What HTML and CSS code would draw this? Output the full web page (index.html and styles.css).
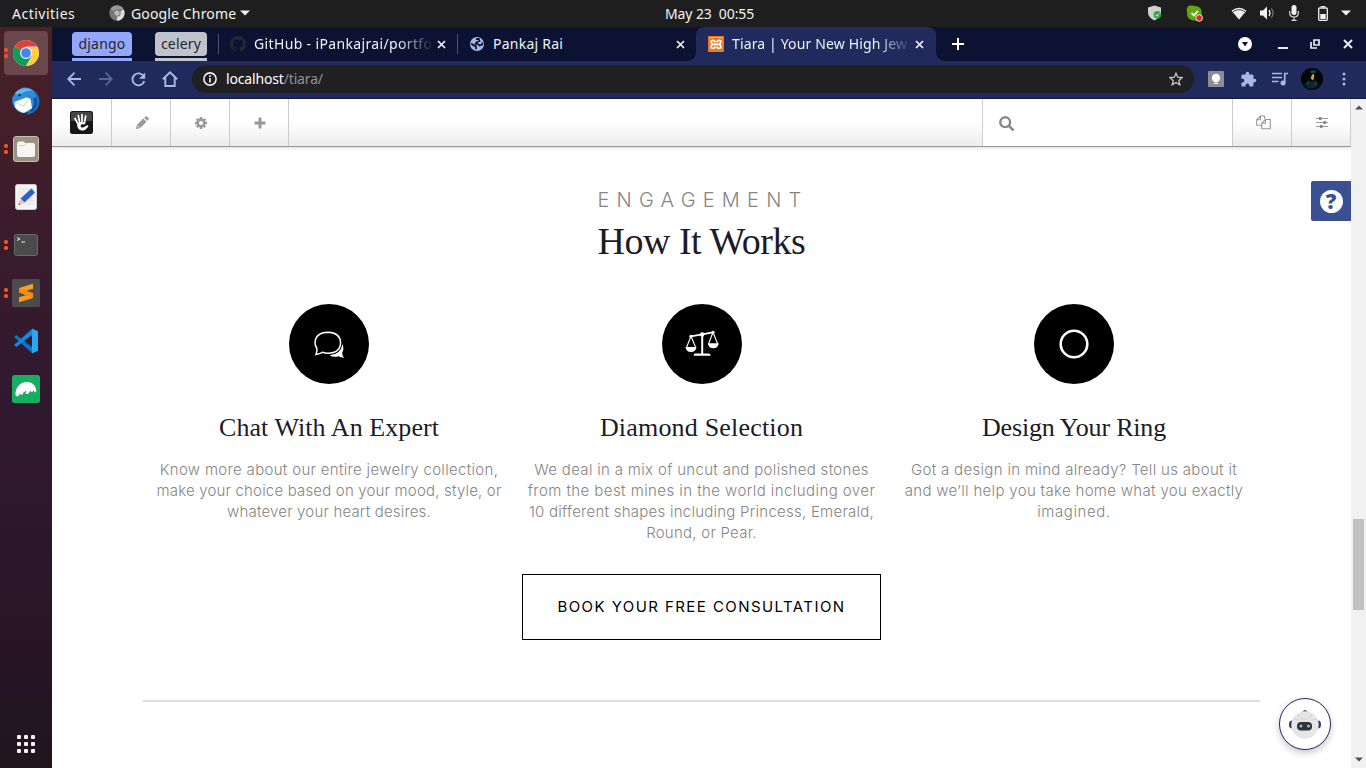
FILE: index.html
```html
<!DOCTYPE html>
<html lang="en">
<head>
<meta charset="utf-8">
<title>Tiara | Your New High Jewelry</title>
<link rel="stylesheet" href="styles.css">
</head>
<body>
<div class="desktop">
<header class="panel">
  <span class="panel-activities">Activities</span>
  <span class="panel-app">
    <svg width="16" height="16" viewBox="0 0 16 16"><circle cx="8" cy="8" r="7.7" fill="#777"/><path d="M8 8L1.400 4A7.700 7.700 0 0 1 14.700 4.500H8z" fill="#999"/><path d="M8 8l6.700-3.500A7.700 7.700 0 0 1 8 15.700z" fill="#ddd"/><circle cx="8" cy="8" r="3.700" fill="#777"/><circle cx="8" cy="8" r="2.600" fill="#bbb"/></svg>
    <span class="app-name">Google Chrome</span>
    <svg width="10" height="6" viewBox="0 0 10 6"><path d="M0 .5h10L5 5.500z" fill="#f2f2f2"/></svg>
  </span>
  <span class="panel-clock">May 23&nbsp; 00:55</span>
  <span class="panel-tray">
    <svg class="tray-shield" width="16" height="16" viewBox="0 0 16 16"><path d="M7.500.5L14 2.500v5c0 3.500-3 6.500-6.500 8C4 14 1 11 1 7.500v-5z" fill="#d0d0d0"/><circle cx="10.300" cy="9.800" r="3.800" fill="#27ae4c"/><path d="M8.500 9.800l1.400 1.400 2.300-2.500" stroke="#fff" fill="none"/></svg>
    <svg class="tray-skype" width="17" height="17" viewBox="0 0 17 17"><path d="M4.500.5C7 .5 8 1 9 1c5 0 7.500 4 6.500 8 1 2 1 7-3.500 7-2 0-2.500-.6-4-.6C3.500 15.400.6 12 1.200 7.500 0 5 1 .5 4.500.5z" fill="#61a515"/><path d="M5.500 8l2.300 2.400L12 6" stroke="#fff" stroke-width="1.800" fill="none"/><circle cx="13.200" cy="13" r="3.300" fill="#e3262c" stroke="#fff" stroke-width=".8"/></svg>
    <svg class="tray-wifi" width="16" height="13" viewBox="0 0 16 13"><path d="M.5 3.800Q8-2.300 15.500 3.800L8 12.500z" fill="#f2f2f2"/><path d="M2 4.800q6-4.300 12 0" stroke="#333" stroke-width=".9" fill="none"/></svg>
    <svg class="tray-sound" width="16" height="14" viewBox="0 0 16 14"><path d="M1 4.500h3L8 .5v13l-4-4H1z" fill="#f2f2f2"/><path d="M10 4.200q2 2.800 0 5.600" stroke="#f2f2f2" stroke-width="1.300" fill="none"/><path d="M12.300 2.300q3.500 4.700 0 9.400" stroke="#777" stroke-width="1.200" fill="none"/></svg>
    <svg class="tray-mic" width="10" height="16" viewBox="0 0 10 16"><rect x="2.500" y="0" width="5" height="10" rx="2.500" fill="#f2f2f2"/><path d="M.7 6v2q0 4 4.300 4t4.300-4V6M5 12v3M2.500 15.300h5" stroke="#ddd" stroke-width="1.200" fill="none"/></svg>
    <svg class="tray-battery" width="10" height="15" viewBox="0 0 10 15"><path d="M3 1.500V.5h4v1" stroke="#f2f2f2" fill="none"/><rect x=".7" y="2" width="8.600" height="12.300" rx="1" stroke="#f2f2f2" stroke-width="1.300" fill="none"/><path d="M2.300 8h5.400v5H2.300z" fill="#f2f2f2"/></svg>
    <svg width="10" height="6" viewBox="0 0 10 6"><path d="M0 .5h10L5 5.500z" fill="#f2f2f2"/></svg>
  </span>
</header>

<div class="workspace">
<nav class="dock">
  <div class="dock-item active"><i class="dots"></i>
    <svg width="28" height="28" viewBox="0 0 28 28"><circle cx="14" cy="14" r="13" fill="#ddd"/><path d="M14 14L2.700 7.500A13 13 0 0 1 25.300 7.500H14z" fill="#db4437"/><path d="M14 14L2.700 7.500A13 13 0 0 0 14 27l5.600-9.700z" fill="#0f9d58"/><path d="M14 8h11.500A13 13 0 0 1 14 27l5.600-9.800z" fill="#ffcd40"/><circle cx="14" cy="14" r="6" fill="#f1f1f1"/><circle cx="14" cy="14" r="4.800" fill="#4285f4"/></svg></div>
  <div class="dock-item">
    <svg width="28" height="28" viewBox="0 0 28 28"><path d="M9 1C18-1 28 5 27.500 15 27 23 21 27 14 27.500c5-3 6-7 6-12z" fill="#1f6fc2"/><path d="M2 8C5 2 12-1 19 2c5 2 6 9 3 16l-4 7-8 1C3 24-1 17 .5 10z" fill="#2f8bd8"/><path d="M3 6C8 0 16 0 21 4 16 3 10 5 7 9z" fill="#63b5ec"/><path d="M21 11c2 5 0 11-4 14l4-1c4-4 5-9 3-13z" fill="#174e9e"/><path d="M2.500 15L14 10.500q4 .5 4.500 2L20 21 12 26c-4-1-7-3-9-6z" fill="#fff"/><path d="M3 15.500l9 3.500 4.500-7" stroke="#ccd6df" fill="none"/><circle cx="7.500" cy="8" r="1.300" fill="#123"/></svg></div>
  <div class="dock-item"><i class="dots"></i>
    <svg width="26" height="26" viewBox="0 0 26 26"><rect x=".5" y=".5" width="25" height="25" rx="2.500" fill="#999181" stroke="#c4bdad"/><path d="M4 8q0-2.500 2-2.500h4q1.500 0 2 1.500h8q2 0 2 2v10q0 2-2 2H6q-2 0-2-2z" fill="#f7f5f2"/><path d="M5 9.500h6l2-2" stroke="#d7d3cc" fill="none"/></svg></div>
  <div class="dock-item">
    <svg width="22" height="26" viewBox="0 0 22 26"><rect x=".5" y=".5" width="21" height="25" rx="2" fill="#f4f4f6" stroke="#ccc"/><path d="M3 5h16M3 8h16M3 11h16M3 14h16M3 17h16M3 20h16" stroke="#dcdce2" stroke-width=".8"/><path d="M16.500 4.500L20 8.500 9.500 18.500l-4-4z" fill="#2c5fd6"/><path d="M5.500 14.500L9.300 18.500 3.500 21z" fill="#eec29b"/><path d="M4 19.300l1.300 1.200-1.800.6z" fill="#333"/></svg></div>
  <div class="dock-item"><i class="dots"></i>
    <svg width="26" height="24" viewBox="0 0 26 24"><rect x="1.500" y="1.500" width="23" height="21" rx="2" fill="#4b4b4b" stroke="#6a6a6a"/><path d="M4 4.500l3 1.500-3 1.500M8.500 9H12" stroke="#eee" fill="none"/></svg></div>
  <div class="dock-item"><i class="dots"></i>
    <svg width="28" height="28" viewBox="0 0 28 28"><rect width="28" height="28" rx="1.500" fill="#4b4b4b"/><path d="M7 9l14-4.200v5L13.500 12 21 14.300v4.600L7 23.200v-5l7.500-2.300L7 13.500z" fill="#ff9d1c"/><path d="M7 13.600V9l14 5.300v4.600z" fill="#f98b12"/></svg></div>
  <div class="dock-item">
    <svg width="26" height="26" viewBox="0 0 26 26"><path d="M1 9l2.300-1.900L19 19v6z" fill="#0078c8"/><path d="M1 17l2.300 1.900L19 7V1z" fill="#1687d9"/><path d="M19 .5l6 2.800v19.400l-6 2.800z" fill="#2ba6f5"/></svg></div>
  <div class="dock-item">
    <svg width="28" height="28" viewBox="0 0 28 28"><rect width="28" height="28" rx="2.500" fill="#17ad63"/><path d="M3.500 20C3 13 8 7 15 7c6 0 9.500 4.500 9.300 9.500q-.8 1.500-1.800.2l-1.200-1.500c-.3 2.500-2.800 1.800-3.300.3l-1.500 3.200h-3.200l1.200-3-3 1.500-.8 2.400H7.500L8 17l-1.300 3.500q-1.600 2-3.200-.5z" fill="#fff"/></svg></div>
  <div class="dock-apps">
    <svg width="18" height="18" viewBox="0 0 18 18" fill="#f4f4f4"><rect width="4" height="4" rx="1"/><rect x="7" width="4" height="4" rx="1"/><rect x="14" width="4" height="4" rx="1"/><rect y="7" width="4" height="4" rx="1"/><rect x="7" y="7" width="4" height="4" rx="1"/><rect x="14" y="7" width="4" height="4" rx="1"/><rect y="14" width="4" height="4" rx="1"/><rect x="7" y="14" width="4" height="4" rx="1"/><rect x="14" y="14" width="4" height="4" rx="1"/></svg></div>
</nav>

<main class="browser">
  <div class="tabs">
    <div class="group django"><span class="chip">django</span></div>
    <div class="group celery"><span class="chip">celery</span></div>
    <div class="tab tab-github">
      <svg class="favicon" width="16" height="16" viewBox="0 0 16 16"><path fill="#24292f" d="M8 0C3.580 0 0 3.580 0 8c0 3.540 2.290 6.530 5.470 7.590.4.070.55-.17.55-.38 0-.19-.01-.82-.01-1.490-2.010.37-2.530-.49-2.690-.94-.09-.23-.48-.94-.82-1.130-.28-.15-.68-.52-.01-.53.63-.01 1.080.58 1.230.82.72 1.210 1.870.87 2.330.66.07-.52.28-.87.51-1.070-1.780-.2-3.640-.89-3.640-3.950 0-.87.31-1.590.82-2.150-.08-.2-.36-1.020.08-2.120 0 0 .67-.21 2.200.82.64-.18 1.320-.27 2-.27s1.360.09 2 .27c1.530-1.040 2.200-.82 2.200-.82.44 1.100.16 1.920.08 2.120.51.56.82 1.270.82 2.150 0 3.070-1.870 3.750-3.650 3.950.29.25.54.73.54 1.480 0 1.070-.01 1.930-.01 2.200 0 .21.15.46.55.38A8 8 0 0 0 16 8c0-4.420-3.580-8-8-8z"/></svg>
      <span class="tab-title">GitHub - iPankajrai/portfo</span>
      <svg class="close" width="9" height="9" viewBox="0 0 9 9"><path d="M1 1l7 7M8 1L1 8" stroke="#f2f4f8" stroke-width="1.700"/></svg>
    </div>
    <div class="tab tab-pankaj">
      <svg class="favicon" width="14" height="14" viewBox="0 0 14 14"><circle cx="7" cy="7" r="7" fill="#a9b8de"/><path d="M6 2.200L8.800 2 9.500 4 7 5 5.500 7H8l1.500 1.500 2.500-1 .7-2M1.200 6.500l2.300 2 2.500.700v3" stroke="#0c1232" stroke-width="1.700" fill="none"/></svg>
      <span class="tab-title plain">Pankaj Rai</span>
      <svg class="close" width="9" height="9" viewBox="0 0 9 9"><path d="M1 1l7 7M8 1L1 8" stroke="#f2f4f8" stroke-width="1.700"/></svg>
    </div>
    <div class="tab tab-active">
      <svg class="favicon" width="16" height="16" viewBox="0 0 16 16"><rect width="16" height="16" rx="1" fill="#f37623"/><path d="M1.500 1.500h13" stroke="#fbb988"/><path d="M7.200 6.200Q6.800 4.300 5 4.300 2.600 4.500 3.300 6.600L4.600 8.300 3.300 10q-.7 2.300 1.700 2.400 1.800 0 2.200-1.900M8.800 6.200Q9.200 4.300 11 4.300q2.400.2 1.700 2.300L11.400 8.300 12.700 10q.7 2.300-1.700 2.400-1.800 0-2.200-1.900M4.600 8.300h6.800" stroke="#fff" stroke-width="1.800" fill="none"/></svg>
      <span class="tab-title">Tiara | Your New High Jew</span>
      <svg class="close" width="9" height="9" viewBox="0 0 9 9"><path d="M1 1l7 7M8 1L1 8" stroke="#f2f4f8" stroke-width="1.700"/></svg>
    </div>
    <svg class="new-tab" width="12" height="12" viewBox="0 0 12 12"><path d="M6 0v12M0 6h12" stroke="#fff" stroke-width="2"/></svg>
    <div class="window-controls">
      <svg width="14" height="14" viewBox="0 0 14 14"><circle cx="7" cy="7" r="7" fill="#fff"/><path d="M4 5h6L7 9.500z" fill="#0c1232"/></svg>
      <svg width="10" height="14" viewBox="0 0 10 14"><path d="M0 11h10" stroke="#e8eaf0" stroke-width="2"/></svg>
      <svg width="10" height="10" viewBox="0 0 10 10"><path d="M4 1h5v5H4zM1 3v6h6" stroke="#e8eaf0" stroke-width="1.700" fill="none"/></svg>
      <svg width="10" height="10" viewBox="0 0 10 10"><path d="M1 1l8 8M9 1L1 9" stroke="#e8eaf0" stroke-width="2"/></svg>
    </div>
  </div>

  <div class="toolbar">
    <span class="tool"><svg width="14" height="14" viewBox="0 0 14 14"><path d="M14 7H1.500M7.500.7L1.200 7l6.300 6.300" stroke="#a9b8e6" stroke-width="1.800" fill="none"/></svg></span>
    <span class="tool"><svg width="14" height="14" viewBox="0 0 14 14"><path d="M0 7h12.500M6.500.7L12.800 7l-6.300 6.300" stroke="#57659a" stroke-width="1.800" fill="none"/></svg></span>
    <span class="tool"><svg width="15" height="15" viewBox="0 0 15 15"><path d="M12.800 4.500A6 6 0 1 0 13.300 9" stroke="#a9b8e6" stroke-width="1.900" fill="none"/><path d="M14.200.5v6.300H8z" fill="#a9b8e6"/></svg></span>
    <span class="tool"><svg width="16" height="16" viewBox="0 0 16 16"><path d="M.8 8.300L8 1.300l7.200 7M3.300 6.500V15h9.400V6.500" stroke="#a9b8e6" stroke-width="1.900" fill="none"/></svg></span>
    <div class="omnibox">
      <svg width="14" height="14" viewBox="0 0 14 14"><circle cx="7" cy="7" r="6.100" stroke="#eee" stroke-width="1.600" fill="none"/><path d="M7 6v4.500M7 3.200v1.700" stroke="#eee" stroke-width="1.700"/></svg>
      <span class="url">localhost<span class="path">/tiara/</span></span>
      <svg class="star" width="14" height="14" viewBox="0 0 14 14"><path d="M7 1.200l1.700 4 4.400.4-3.300 2.900 1 4.300L7 10.500l-3.800 2.300 1-4.300L.9 5.600l4.400-.4z" stroke="#c8c8cc" stroke-width="1.300" fill="none"/></svg>
    </div>
    <span class="tool"><svg width="16" height="16" viewBox="0 0 16 16"><rect width="16" height="16" rx="1" fill="#8b8d90"/><circle cx="8" cy="7" r="4.200" fill="#fff"/><path d="M6 10h4v2.800H6z" fill="#fff"/><path d="M5.500 11.300h5" stroke="#8b8d90" stroke-width=".7"/></svg></span>
    <span class="tool"><svg width="17" height="17" viewBox="0 0 24 24"><path d="M20.500 11H19V7c0-1.100-.9-2-2-2h-4V3.500a2.500 2.500 0 0 0-5 0V5H4c-1.100 0-2 .9-2 2v3.800h1.500a2.700 2.700 0 0 1 0 5.400H2V20c0 1.100.9 2 2 2h3.800v-1.500a2.700 2.700 0 0 1 5.400 0V22H17c1.100 0 2-.9 2-2v-4h1.500a2.500 2.500 0 0 0 0-5z" fill="#a9b8e6"/></svg></span>
    <span class="tool"><svg width="16" height="14" viewBox="0 0 16 14"><path d="M0 1.500h10M0 5.500h10M0 9.500h6.500M12.700 11V1.500H16" stroke="#a9b8e6" stroke-width="1.700" fill="none"/><circle cx="11" cy="11" r="2.500" fill="#a9b8e6"/></svg></span>
    <span class="tool"><svg width="22" height="22" viewBox="0 0 22 22"><circle cx="11" cy="11" r="11" fill="#030506"/><path d="M9 3.500q3-2 6-.5l-1 2-4 .3z" fill="#0b4a50"/><path d="M11 6.500l2.200-.5v3.500l-1.200 3-2.300-2z" fill="#d99a53"/><path d="M3 16l5-4 3 2 4-2 3 5q-6 5-11 3z" fill="#072a30"/><path d="M6 16l2-2M13 15l2 2" stroke="#14565a"/></svg></span>
    <span class="tool"><svg width="4" height="14" viewBox="0 0 4 14" fill="#a9b8e6"><circle cx="2" cy="2" r="1.500"/><circle cx="2" cy="7" r="1.500"/><circle cx="2" cy="12" r="1.500"/></svg></span>
  </div>

  <div class="viewport">
    <div class="page">
      <div class="cms-bar">
        <span class="cms-cell cms-logo"><svg width="23" height="23" viewBox="0 0 23 23"><rect width="23" height="23" rx="2.500" fill="#161616"/><path d="M1 3q0-2 2-2h17q2 0 2 2v7H1z" fill="#454545"/><path d="M5 7.500l2.800 5M8.300 4.500l1.200 6.500M12 3.500v7.300M15.700 5l-1.200 6.500" stroke="#fff" stroke-width="1.700" stroke-linecap="round"/><path d="M7.200 12.300q4-2.800 8.300-.8-.2 2-1.200 2-3-.8-3.800 1.200 0 2.300 2.700 1.800l4-2.300q1.600-.2 1 1.200-2.600 4.200-6.600 4.200-5-.6-4.400-7.300z" fill="#fff"/></svg></span>
        <span class="cms-cell"><svg width="13" height="13" viewBox="0 0 13 13"><path d="M0 13l.8-4L7.300 2.500l3.200 3.200L4 12.200zM8.200 1.700L9.400.5q.8-.7 1.600 0l1.500 1.500q.7.800 0 1.600l-1.200 1.200z" fill="#999"/><path d="M1.300 9.700l2 2" stroke="#f8f8f8"/></svg></span>
        <span class="cms-cell"><svg width="12" height="12" viewBox="0 0 12 12"><circle cx="6" cy="6" r="3.300" stroke="#999" stroke-width="2.400" fill="none"/><path d="M6 0v2.200M6 9.800V12M0 6h2.200M9.800 6H12M1.800 1.800l1.500 1.500M8.700 8.700l1.500 1.500M10.200 1.800L8.700 3.300M3.300 8.700l-1.500 1.500" stroke="#999" stroke-width="2.500"/></svg></span>
        <span class="cms-cell"><svg width="12" height="12" viewBox="0 0 12 12"><path d="M6 .5v11M.5 6h11" stroke="#999" stroke-width="3"/></svg></span>
        <span class="cms-space"></span>
        <span class="cms-search"><svg width="15" height="15" viewBox="0 0 15 15"><circle cx="6.200" cy="6.200" r="4.900" stroke="#888" stroke-width="2.400" fill="none"/><path d="M9.700 9.700l4 4" stroke="#888" stroke-width="2.600" stroke-linecap="round"/></svg></span>
        <span class="cms-cell"><svg width="15" height="15" viewBox="0 0 15 15"><path d="M4.500 1h4v3M.7 4.800v5.500H6M4.500 1L.7 4.800h3.800zM9.500 4.500h4.800v9.200H5.700V8.300zM9.500 4.500v3.800H5.700" stroke="#999" stroke-width="1.100" fill="none"/></svg></span>
        <span class="cms-cell"><svg width="12" height="12" viewBox="0 0 12 12"><path d="M0 1.500h12M0 5.500h12M0 9.500h12" stroke="#999"/><path d="M3 0h2.500v3H3zM7.500 4H10v3H7.500zM4 8h2.500v3H4z" fill="#888"/></svg></span>
      </div>

      <button class="help" aria-label="Help"><span>?</span></button>

      <section class="how">
        <div class="title-group">
          <p class="eyebrow">ENGAGEMENT</p>
          <h2>How It Works</h2>
        </div>
        <div class="steps">
          <article class="step">
            <div class="disc"><svg width="32" height="30" viewBox="0 0 32 30"><path d="M3 25.500q1.500-3 .8-6.300Q2 16.500 2 13.800 2.500 3.700 15 3.300q12.200.4 12.600 10.500-.4 10.300-12.600 10.500-2.800 0-5.500-1-2.800 1.500-6.500 2.200z" stroke="#fff" stroke-width="1.500" fill="none"/><path d="M29.500 15q1.900 4.700-.4 9 .3 3 2 4.700-3.700-.2-5.500-1.400-5.500 1.500-9-1.100 11.200-.7 12.900-11.200z" fill="#fff"/></svg></div>
            <h3 class="chat-title">Chat With An Expert</h3>
            <p><span class="track-4">Know more about our entire jewelry collection,</span><br><span class="track-2">make your choice based on your mood, style, or</span><br><span class="track-2">whatever your heart desires.</span></p>
          </article>
          <article class="step">
            <div class="disc"><svg width="34" height="28" viewBox="0 0 34 28"><path d="M6 6.300L28 2.300" stroke="#fff" stroke-width="1.700"/><path d="M17.200 3v22" stroke="#fff" stroke-width="2"/><circle cx="17.200" cy="4.500" r="2.200" fill="#fff"/><circle cx="6" cy="6.300" r="1.600" fill="#fff"/><circle cx="28" cy="2.300" r="1.600" fill="#fff"/><path d="M6 6.300L1.700 17M6 6.300L10.500 17M28 2.300L23.700 13.500M28 2.300L32.500 13.500" stroke="#fff" stroke-width="1.100"/><path d="M.5 17h11q-.6 5-5.500 5T.5 17zM22.800 13.300h11q-.6 5-5.500 5t-5.500-5zM8.700 25.500q0-2 1.500-2h13.500q1.800 0 2 2.300h-17z" fill="#fff"/></svg></div>
            <h3 class="diamond-title">Diamond Selection</h3>
            <p><span class="track-4">We deal in a mix of uncut and polished stones</span><br><span class="track-5">from the best mines in the world including over</span><br><span class="track-3">10 different shapes including Princess, Emerald,</span><br><span class="track-3">Round, or Pear.</span></p>
          </article>
          <article class="step">
            <div class="disc"><svg width="30" height="30" viewBox="0 0 30 30"><circle cx="15" cy="15" r="13.300" stroke="#fff" stroke-width="2.600" fill="none"/></svg></div>
            <h3 class="ring-title">Design Your Ring</h3>
            <p><span class="track-4">Got a design in mind already? Tell us about it</span><br><span class="track-4">and we’ll help you take home what you exactly</span><br><span class="track-6">imagined.</span></p>
          </article>
        </div>
        <a class="book">BOOK YOUR FREE CONSULTATION</a>
        <hr>
      </section>

      <button class="bot" aria-label="Chat"><svg width="34" height="32" viewBox="0 0 34 32"><path d="M14 4.500Q17-.5 20 4.500zM4 12.500q-3 0-3 4t3 4zM30 12.500q3 0 3 4t-3 4z" fill="#3d2f6b"/><circle cx="17" cy="17" r="13.700" fill="#e6e6e6"/><path d="M10 6q1 5 7 5t7-5M5 11l6 1M29 11l-6 1" stroke="#d3d3d3" fill="none"/><rect x="9" y="14" width="15" height="8.500" rx="4" fill="#333"/><circle cx="13" cy="18" r="1.500" fill="#8ec9d3"/><circle cx="20.500" cy="18" r="1.500" fill="#8ec9d3"/></svg></button>
    </div>
    <div class="scrollbar">
      <svg width="8" height="5" viewBox="0 0 8 5"><path d="M0 4.500L4 .5l4 4z" fill="#505050"/></svg>
      <i class="thumb"></i>
      <svg width="8" height="5" viewBox="0 0 8 5"><path d="M0 .5h8l-4 4z" fill="#505050"/></svg>
    </div>
  </div>
</main>
</div>
</div>
</body>
</html>
```
FILE: styles.css
```css
* { box-sizing: border-box; }
body { margin: 0; overflow: hidden; background: #fff; font-family: "Noto Sans", "Open Sans", sans-serif; }
svg { display: block; flex: none; }
h2, h3, p { margin: 0; font-weight: 400; white-space: nowrap; }
button { border: 0; padding: 0; }

.desktop { width: 1366px; height: 768px; display: flex; flex-direction: column; }

/* Top panel */
.panel { height: 27px; flex: none; display: grid; grid-template-columns: 97px 556px 1fr auto; align-items: center; background: #1e1e1e; color: #f2f2f2; font-size: 14px; line-height: 25px; padding: 0 15px 1px 12px; white-space: nowrap; }
.panel-activities { letter-spacing: .5px; }
.panel-app { display: flex; align-items: center; }
.app-name { margin: 0 4px 0 6px; letter-spacing: .14px; }
.panel-clock { letter-spacing: -.1px; }
.panel-tray { display: flex; align-items: center; }
.tray-shield { margin-right: 23px; }
.tray-skype { margin-right: 28px; }
.tray-wifi { margin-right: 12px; }
.tray-sound { margin-right: 14px; }
.tray-mic { margin-right: 19px; }
.tray-battery { margin-right: 13px; }

.workspace { flex: 1; display: flex; min-height: 0; }

/* Dock */
.dock { width: 52px; flex: none; display: flex; flex-direction: column; gap: 4px; padding: 4px 4px 0; background: linear-gradient(#492126 0, #3c1c2b 25%, #32192f 45%, #2b172c 70%, #251524 90%, #22151d); }
.dock-item { position: relative; height: 44px; flex: none; display: flex; align-items: center; justify-content: center; border-radius: 4px; }
.dock-item.active { background: #69474c; }
.dots { position: absolute; left: 0; top: 16px; width: 4px; height: 12px; background: radial-gradient(circle, #e95420 1.900px, transparent 2.300px) 0 0 / 4px 6px; }
.dock-apps { margin-top: auto; height: 48px; display: flex; align-items: center; justify-content: center; }

/* Browser chrome */
.browser { flex: 1; display: flex; flex-direction: column; min-width: 0; }
.tabs { height: 34px; flex: none; display: flex; align-items: center; background: #0c1232; color: #f0f2f8; font-size: 14px; }
.group { height: 34px; padding-top: 5px; border-bottom: 3px solid; }
.group.django { width: 60px; margin-left: 20px; border-color: #94a7ff; letter-spacing: .2px; }
.group.celery { width: 52px; margin-left: 23px; border-color: #c0c3cb; letter-spacing: .2px; }
.chip { display: flex; align-items: center; justify-content: center; height: 24px; padding-bottom: 2px; border-radius: 4px; background: #94a7ff; color: #25262c; }
.celery .chip { background: #c0c3cb; }
.tab { display: flex; align-items: center; height: 20px; border-left: 1px solid #4c5375; }
.tab-github { width: 239px; margin-left: 11px; padding-left: 11px; letter-spacing: .35px; }
.tab-pankaj { width: 239px; padding-left: 12px; letter-spacing: .25px; }
.tab-active { position: relative; width: 240px; height: 34px; border: 0; padding-left: 12px; border-radius: 8px 8px 0 0; background: #202a5c; letter-spacing: .14px; }
.tab-active::before, .tab-active::after { content: ""; position: absolute; bottom: 0; width: 8px; height: 8px; }
.tab-active::before { left: -8px; background: radial-gradient(circle at 0 0, transparent 7.500px, #202a5c 8px); }
.tab-active::after { right: -8px; background: radial-gradient(circle at 100% 0, transparent 7.500px, #202a5c 8px); }
.tab-title { width: 177px; margin-left: 8px; margin-top: -1px; overflow: hidden; white-space: nowrap; -webkit-mask-image: linear-gradient(90deg, #000 144px, transparent 180px); mask-image: linear-gradient(90deg, #000 144px, transparent 180px); }
.tab-title.plain { width: 183px; margin-left: 9px; -webkit-mask-image: none; mask-image: none; }
.close { margin-left: 6px; }
.tab-pankaj .close { margin-left: 0; }
.new-tab { margin-left: 16px; }
.window-controls { flex: 1; display: flex; align-items: center; justify-content: flex-end; padding-right: 13px; }
.window-controls svg:nth-child(1) { margin-right: 26px; }
.window-controls svg:nth-child(2) { margin-right: 22px; }
.window-controls svg:nth-child(3) { margin-right: 23px; }

.toolbar { height: 38px; flex: none; display: flex; align-items: center; padding: 0 6px 1px; background: #202a5c; border-bottom: 1px solid #151b40; }
.tool { width: 32px; display: flex; justify-content: center; }
.omnibox { flex: 1; height: 28px; margin: 0 6px; display: flex; align-items: center; padding: 0 11px; border-radius: 14px; background: #202023; color: #fff; font-size: 14px; letter-spacing: -.16px; }
.url { flex: 1; margin-left: 9px; padding-bottom: 2px; }
.path { color: #929295; }

/* Page */
.viewport { flex: 1; display: flex; min-height: 0; background: #fff; }
.page { position: relative; flex: 1; min-width: 0; }
.scrollbar { width: 15px; display: flex; flex-direction: column; align-items: center; justify-content: space-between; padding: 6px 0; background: #f1f1f1; position: relative; }
.thumb { position: absolute; top: 420px; left: 2px; width: 11px; height: 91px; background: #c1c1c1; }
.cms-bar { height: 48px; display: flex; border-bottom: 1px solid #999; background: linear-gradient(#fff 50%, #ececec); box-shadow: 0 1px 3px rgba(0, 0, 0, .15); }
.cms-cell { width: 59px; display: flex; align-items: center; justify-content: center; padding-left: 2px; border-right: 1px solid #ccc; }
.cms-logo { width: 60px; padding-left: 0; }
.cms-space { flex: 1; }
.cms-search { width: 251px; display: flex; align-items: center; padding: 2px 0 0 16px; background: #fff; border: 1px solid #ccc; border-width: 0 1px; }

.help { position: absolute; right: 0; top: 82px; width: 40px; height: 40px; border-radius: 2px 0 0 2px; background: #3b5092; display: flex; align-items: center; justify-content: center; }
.help span { width: 23px; height: 23px; border-radius: 50%; background: #fff; color: #3b5092; font: 800 21px/23px "Open Sans", sans-serif; text-align: center; }

.how { width: 1117px; margin-left: 91px; display: flex; flex-direction: column; align-items: center; }
.title-group { width: 208px; margin-top: 38px; }
.eyebrow { font: 300 20px/30px Inter, sans-serif; letter-spacing: 7.200px; color: #858585; }
h2 { font: 400 38px/50px "Liberation Serif", serif; letter-spacing: -.5px; color: #1d1b26; margin-top: 1px; }
.steps { display: grid; grid-template-columns: 372px 373px 372px; margin-top: 38px; text-align: center; }
.disc { width: 80px; height: 80px; margin: 0 auto; border-radius: 50%; background: #000; display: flex; align-items: center; justify-content: center; }
.step:nth-child(2) .disc { padding-left: 1px; }
h3 { font: 400 26px/34px "Liberation Serif", serif; color: #1d1b26; margin-top: 27px; }
.chat-title { letter-spacing: .07px; }
.diamond-title { letter-spacing: .19px; }
.ring-title { letter-spacing: -.2px; }
.step p { font: 300 15px/21px Inter, sans-serif; color: #858585; margin-top: 14px; }
.track-2 { letter-spacing: .18px; }
.track-3 { letter-spacing: .25px; }
.track-4 { letter-spacing: .32px; }
.track-5 { letter-spacing: .43px; }
.track-6 { letter-spacing: .6px; }
.book { width: 359px; height: 66px; margin-top: 31px; border: 1px solid #000; display: flex; align-items: center; justify-content: center; font: 400 15px/20px Inter, sans-serif; letter-spacing: 1.430px; color: #000; }
hr { width: 100%; height: 2px; margin: 60px 0 0; border: 0; background: #ddd; }

.bot { position: absolute; right: 20px; bottom: 18px; width: 52px; height: 52px; border: 1px solid #2f2265; border-radius: 50%; background: #fff; display: flex; align-items: center; justify-content: center; box-shadow: 0 3px 7px rgba(0, 0, 0, .22); }
```
